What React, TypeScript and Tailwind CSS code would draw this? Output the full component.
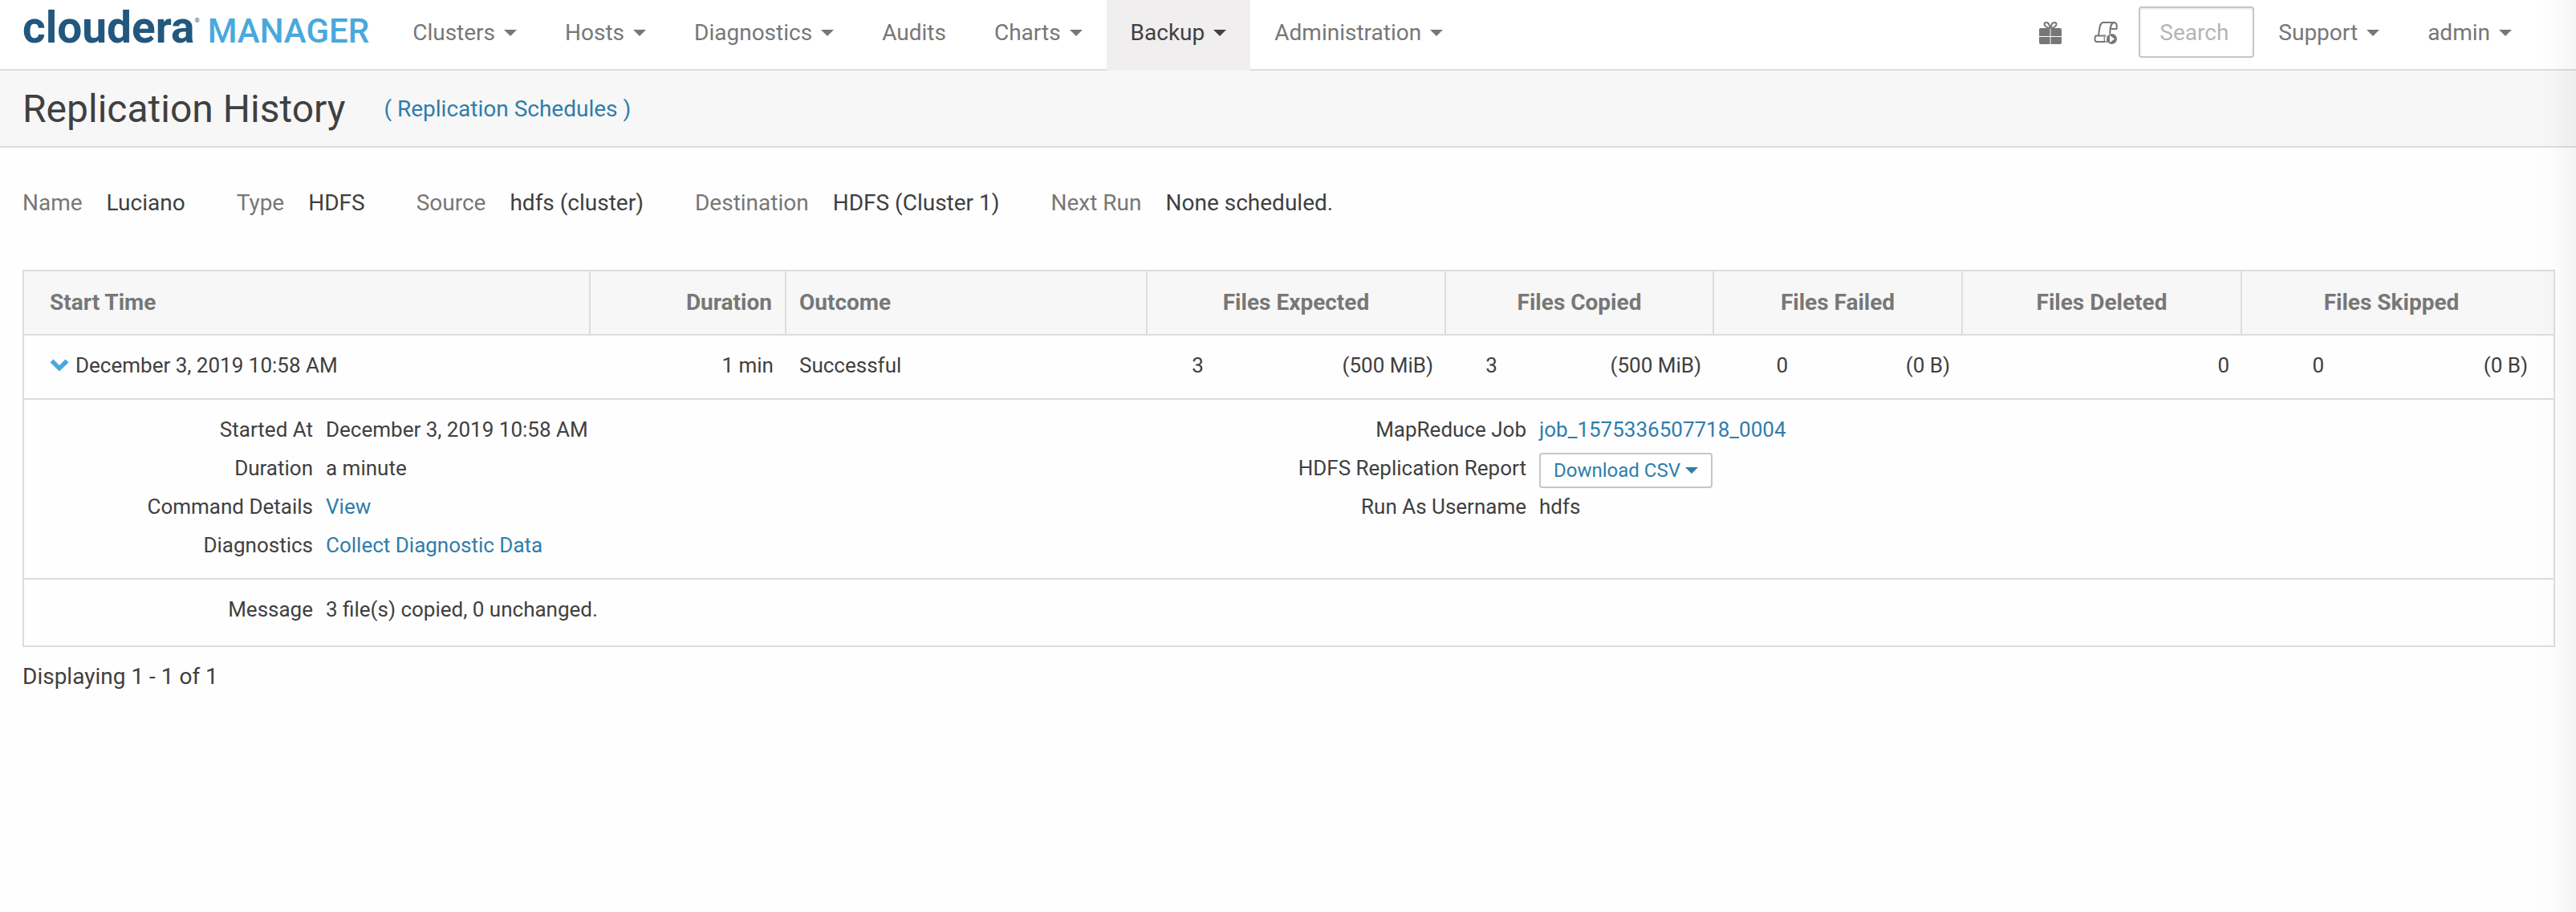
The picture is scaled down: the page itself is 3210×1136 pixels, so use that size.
import type { ReactNode } from "react";

function Caret() {
  return (
    <svg viewBox="0 0 16 8" className="h-2 w-4 shrink-0" aria-hidden="true">
      <path d="M0 0h16L8 8z" fill="currentColor" />
    </svg>
  );
}

function MenuButton({ label, active = false }: { label: string; active?: boolean }) {
  return (
    <button
      type="button"
      className={
        active
          ? "flex items-center gap-[11px] bg-[#f0eeef] px-[30px] pt-[21px] pb-[27px] text-[#404040]"
          : "mb-0.5 flex items-center gap-[11px] px-[30px] pt-[21px] pb-[25px] text-[#777777]"
      }
    >
      {label}
      <Caret />
    </button>
  );
}

function GiftIcon() {
  return (
    <svg viewBox="0 0 28 28" className="size-7" aria-hidden="true">
      <g fill="none" stroke="currentColor" strokeWidth="2">
        <path d="M13 8.5C9 7 6.500 5 6.500 3.200 6.500 1.800 7.600 1 9 1c2.600 0 4.200 3.500 4.400 7.500" />
        <path d="M15 8.500c4-1.500 6.500-3.500 6.500-5.300C21.500 1.800 20.400 1 19 1c-2.600 0-4.200 3.500-4.400 7.500" />
      </g>
      <g fill="currentColor">
        <path d="M2 8h11.500v10H0v-8a2 2 0 0 1 2-2z" />
        <path d="M14.500 8H26a2 2 0 0 1 2 2v8H14.500z" />
        <path d="M0 19h13.500v9H2a2 2 0 0 1-2-2z" />
        <path d="M14.500 19H28v7a2 2 0 0 1-2 2H14.500z" />
      </g>
    </svg>
  );
}

function ScriptRunIcon() {
  return (
    <svg viewBox="0 0 30 28" className="h-7 w-[30px]" aria-hidden="true">
      <g fill="none" stroke="currentColor" strokeWidth="2" strokeLinejoin="round">
        <path d="M6 17C7 13 6.500 1 12 1h14" />
        <path d="M26 1c-4 0-5.500 4-5.800 14" />
        <path d="M26 1c3 1 3 5 2.500 8h-7" />
        <path d="M16 17.500H3.500C.8 17.500.8 25 3.500 25H17" />
        <path d="M15 17.500c-2 2-2 5.500 0 7.500" />
      </g>
      <circle cx="22.500" cy="21.500" r="6.500" fill="currentColor" />
      <path d="M20 17v9l6-4.500z" fill="white" />
      <path d="M16 16c-2.500 3-2.500 8 .5 11" fill="none" stroke="white" strokeWidth="1" />
    </svg>
  );
}

function Detail({ label, children }: { label: string; children: ReactNode }) {
  return (
    <div className="flex h-12 items-start gap-4 leading-[48px]">
      <dt className="w-[328px] shrink-0 text-right">{label}</dt>
      <dd>{children}</dd>
    </div>
  );
}

function Link({ children }: { children: ReactNode }) {
  return (
    <a href="#" className="text-[#2f7dab]">
      {children}
    </a>
  );
}

const summary = [
  ["Name", "Luciano"],
  ["Type", "HDFS"],
  ["Source", "hdfs (cluster)"],
  ["Destination", "HDFS (Cluster 1)"],
  ["Next Run", "None scheduled."],
];

const th = "border-l-2 border-y-2 border-[#dddddd] px-4 py-[19px] font-bold";
const tdBase = "border-b-2 border-[#dddddd] pt-[17px] pb-[21px]";
const td = "border-b-2 border-[#dddddd] pr-[14px] pt-[17px] pb-[21px]";
const wide = "border-x-2 border-b-2 border-[#dddddd] pl-8 pr-24 pt-[13px]";

export default function App() {
  return (
    <div className="relative min-h-screen bg-[#fefefe] font-['Roboto',sans-serif] text-[28px] leading-10 text-[#404040]">
      <header className="flex bg-[linear-gradient(to_top,#dddddd_2px,#ffffff_2px)]">
        <a href="#" aria-label="Cloudera Manager" className="flex items-start pt-3.5 pl-7 leading-10">
          <span className="flex items-baseline">
            <span className="text-[55px] font-bold text-[#22577e]">cloudera</span>
            <span className="self-start pt-2 text-[8px] leading-none text-[#22577e]">®</span>
            <span className="ml-2.5 text-[42px] font-medium text-[#49a8dd]">MANAGER</span>
          </span>
        </a>
        <nav className="ml-6 flex">
          <MenuButton label="Clusters" />
          <MenuButton label="Hosts" />
          <MenuButton label="Diagnostics" />
          <a href="#" className="px-[30px] pt-[21px] text-[#777777]">
            Audits
          </a>
          <MenuButton label="Charts" />
          <MenuButton label="Backup" active />
          <MenuButton label="Administration" />
        </nav>
        <div className="ml-auto flex items-start pr-[50px] text-[#777777]">
          <button type="button" aria-label="What's new" className="mt-[27px] mr-10">
            <GiftIcon />
          </button>
          <button type="button" aria-label="Running commands" className="mt-[27px] mr-[26px]">
            <ScriptRunIcon />
          </button>
          <input
            type="text"
            aria-label="Search"
            placeholder="Search"
            className="mt-2 h-16 w-36 rounded border-2 border-[#c6c6c6] bg-white pr-2 pl-6 shadow-[inset_0_2px_2px_rgba(0,0,0,0.07)] placeholder:text-[#b5b5b5]"
          />
          <MenuButton label="Support" />
          <MenuButton label="admin" />
        </div>
      </header>

      <div className="flex items-center gap-12 border-b-2 border-[#dddddd] bg-[#f7f7f7] px-7 pt-[18px] pb-4">
        <h1 className="text-5xl leading-[60px]">Replication History</h1>
        <Link>( Replication Schedules )</Link>
      </div>

      <main className="pt-[49px] pr-[26px] pl-7">
        <dl className="flex gap-16">
          {summary.map(([label, value]) => (
            <div key={label} className="flex gap-[30px]">
              <dt className="text-[#777777]">{label}</dt>
              <dd>{value}</dd>
            </div>
          ))}
        </dl>

        <table className="mt-[63px] w-full table-fixed border-separate border-spacing-0 text-[26px]">
          <colgroup>
            <col />
            <col className="w-[244px]" />
            <col className="w-[450px]" />
            <col className="w-[86px]" />
            <col className="w-[286px]" />
            <col className="w-[80px]" />
            <col className="w-[254px]" />
            <col className="w-[108px]" />
            <col className="w-[202px]" />
            <col className="w-[348px]" />
            <col className="w-[118px]" />
            <col className="w-[274px]" />
          </colgroup>
          <thead className="bg-[#f7f7f7] text-[28px] text-[#777777]">
            <tr>
              <th className={`${th} pl-8 text-left`}>Start Time</th>
              <th className={`${th} text-right`}>Duration</th>
              <th className={`${th} text-left`}>Outcome</th>
              <th colSpan={2} className={th}>Files Expected</th>
              <th colSpan={2} className={th}>Files Copied</th>
              <th colSpan={2} className={th}>Files Failed</th>
              <th className={th}>Files Deleted</th>
              <th colSpan={2} className={`${th} border-r-2 pr-8`}>Files Skipped</th>
            </tr>
          </thead>
          <tbody>
            <tr className="text-right">
              <td className={`${td} border-l-2 pl-8 text-left`}>
                <button type="button" aria-expanded="true" className="flex items-center gap-2">
                  <svg viewBox="0 0 24 16" className="h-4 w-6" aria-hidden="true">
                    <path d="M.5 4.500L4.500.5 12 8l7.500-7.500 4 4L12 15.500z" fill="#49a8dd" />
                  </svg>
                  December 3, 2019 10:58 AM
                </button>
              </td>
              <td className={td}>1 min</td>
              <td className={`${td} pl-[18px] text-left`}>Successful</td>
              <td className={td}>3</td>
              <td className={td}>(500 MiB)</td>
              <td className={td}>3</td>
              <td className={td}>(500 MiB)</td>
              <td className={td}>0</td>
              <td className={td}>(0 B)</td>
              <td className={td}>0</td>
              <td className={td}>0</td>
              <td className={`${tdBase} border-r-2 pr-8`}>(0 B)</td>
            </tr>
            <tr>
              <td colSpan={12} className={`${wide} pb-[17px]`}>
                <div className="grid grid-cols-2">
                  <dl>
                    <Detail label="Started At">December 3, 2019 10:58 AM</Detail>
                    <Detail label="Duration">a minute</Detail>
                    <Detail label="Command Details"><Link>View</Link></Detail>
                    <Detail label="Diagnostics"><Link>Collect Diagnostic Data</Link></Detail>
                  </dl>
                  <dl>
                    <Detail label="MapReduce Job"><Link>job_1575336507718_0004</Link></Detail>
                    <Detail label="HDFS Replication Report">
                      <button
                        type="button"
                        className="mt-[5px] flex h-11 items-center gap-1.5 rounded border-2 border-[#c6c6c6] bg-white px-4 text-2xl text-[#2f7dab]"
                      >
                        Download CSV
                        <Caret />
                      </button>
                    </Detail>
                    <Detail label="Run As Username">hdfs</Detail>
                  </dl>
                </div>
              </td>
            </tr>
            <tr>
              <td colSpan={12} className={`${wide} pb-[21px]`}>
                <dl>
                  <Detail label="Message">3 file(s) copied, 0 unchanged.</Detail>
                </dl>
              </td>
            </tr>
          </tbody>
        </table>
        <p className="mt-[17px]">Displaying 1 - 1 of 1</p>
      </main>

      <div className="pointer-events-none absolute inset-y-0 right-0 w-14 bg-linear-to-l from-black/4 via-black/1 to-transparent" />
    </div>
  );
}
